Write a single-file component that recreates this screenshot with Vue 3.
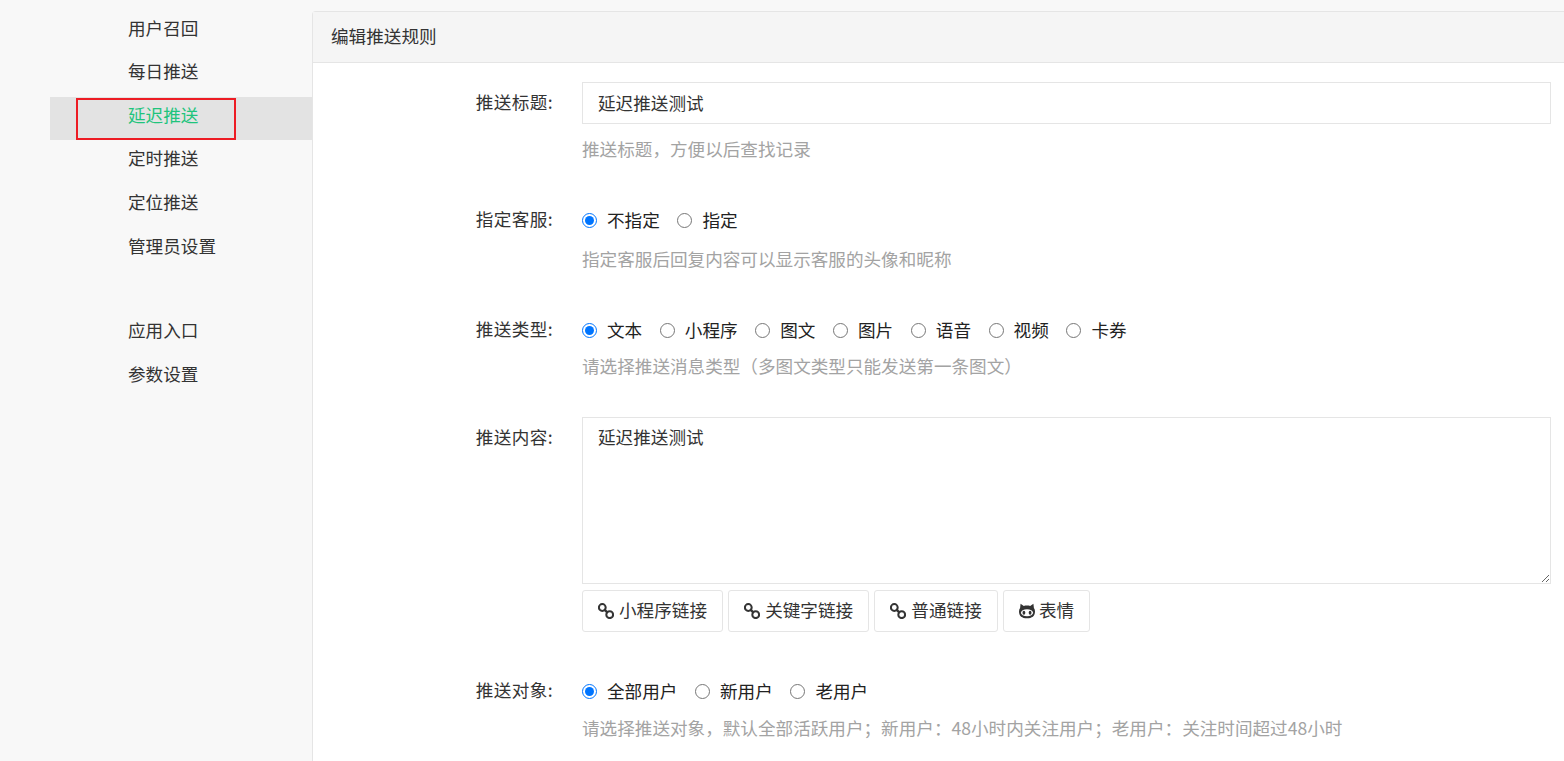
<template>
  <div class="page">
    <aside class="sidebar">
      <ul class="menu">
        <li v-for="item in menuTop" :key="item" class="menu-item" :class="{ active: item === '延迟推送' }">
          {{ item }}
          <span v-if="item === '延迟推送'" class="marker"></span>
        </li>
      </ul>
      <ul class="menu menu-second">
        <li v-for="item in menuBottom" :key="item" class="menu-item">{{ item }}</li>
      </ul>
    </aside>

    <section class="panel">
      <div class="panel-heading">编辑推送规则</div>
      <form class="panel-body" @submit.prevent>
        <div class="row row-title">
          <label class="row-label">推送标题:</label>
          <div class="row-main">
            <input class="text-input" type="text" value="延迟推送测试" />
            <p class="help help-title">推送标题，方便以后查找记录</p>
          </div>
        </div>

        <div class="row row-staff">
          <label class="row-label">指定客服:</label>
          <div class="row-main">
            <div class="radios">
              <label v-for="(opt, i) in staffOptions" :key="opt" class="radio">
                <input type="radio" name="staff" :checked="i === 0" />{{ opt }}
              </label>
            </div>
            <p class="help help-staff">指定客服后回复内容可以显示客服的头像和昵称</p>
          </div>
        </div>

        <div class="row row-type">
          <label class="row-label">推送类型:</label>
          <div class="row-main">
            <div class="radios">
              <label v-for="(opt, i) in typeOptions" :key="opt" class="radio">
                <input type="radio" name="type" :checked="i === 0" />{{ opt }}
              </label>
            </div>
            <p class="help">请选择推送消息类型（多图文类型只能发送第一条图文）</p>
          </div>
        </div>

        <div class="row row-content">
          <label class="row-label">推送内容:</label>
          <div class="row-main">
            <textarea class="text-area" value="延迟推送测试"></textarea>
            <div class="tools">
              <button v-for="btn in linkButtons" :key="btn" type="button" class="tool-btn">
                <svg class="icon" viewBox="0 0 16 16" width="16" height="16">
                  <circle cx="4.300" cy="4.500" r="3.400" fill="none" stroke="#333" stroke-width="2" />
                  <circle cx="11.700" cy="11.700" r="3.400" fill="none" stroke="#333" stroke-width="2" />
                  <path d="M6.200 6.400l3.600 3.400" stroke="#333" stroke-width="2.400" />
                </svg>
                {{ btn }}
              </button>
              <button type="button" class="tool-btn tool-emoji">
                <svg class="icon" viewBox="0 0 16 16" width="16" height="16">
                  <path d="M1.600.800l3.200 2.100c2-.5 4.400-.5 6.400 0L14.400.800l.5 4.300c.7.900 1.100 2 1.100 3.300C16 13 13 15.200 8 15.200S0 13 0 8.400c0-1.300.4-2.400 1.100-3.300z" fill="#333" />
                  <ellipse cx="8" cy="9.800" rx="6.100" ry="3.500" fill="#fff" />
                  <ellipse cx="4.900" cy="9.800" rx="1.400" ry="2" fill="#333" />
                  <ellipse cx="11.100" cy="9.800" rx="1.400" ry="2" fill="#333" />
                </svg>
                表情
              </button>
            </div>
          </div>
        </div>

        <div class="row row-target">
          <label class="row-label">推送对象:</label>
          <div class="row-main">
            <div class="radios">
              <label v-for="(opt, i) in targetOptions" :key="opt" class="radio">
                <input type="radio" name="target" :checked="i === 0" />{{ opt }}
              </label>
            </div>
            <p class="help help-target">请选择推送对象，默认全部活跃用户；新用户：48小时内关注用户；老用户：关注时间超过48小时</p>
          </div>
        </div>
      </form>
    </section>
  </div>
</template>

<script setup>
const menuTop = ['用户召回', '每日推送', '延迟推送', '定时推送', '定位推送', '管理员设置']
const menuBottom = ['应用入口', '参数设置']
const staffOptions = ['不指定', '指定']
const typeOptions = ['文本', '小程序', '图文', '图片', '语音', '视频', '卡券']
const targetOptions = ['全部用户', '新用户', '老用户']
const linkButtons = ['小程序链接', '关键字链接', '普通链接']
</script>

<style>
html,
body {
  margin: 0;
  background: #fff;
}
</style>

<style scoped>
.page {
  display: flex;
  height: 761px;
  overflow: hidden;
  background: #f8f8f8;
  font-family: "Noto Sans CJK SC", "Liberation Sans", sans-serif;
  font-size: 17.6px;
  color: #333;
}

.sidebar {
  width: 262px;
  margin-left: 50px;
  padding-top: 9.6px;
  flex-shrink: 0;
}

.menu {
  list-style: none;
  margin: 0;
  padding: 0;
}

.menu-second {
  margin-top: 41.2px;
}

.menu-item {
  position: relative;
  height: 43.6px;
  box-sizing: border-box;
  padding-left: 78px;
  line-height: 36.4px;
}

.menu-item.active {
  background: #e3e3e3;
  color: #1fc47d;
}

.marker {
  position: absolute;
  left: 26px;
  top: 1px;
  width: 160px;
  height: 42px;
  box-sizing: border-box;
  border: 2px solid #ed1c24;
}

.panel {
  flex: 1;
  margin-top: 11px;
  background: #fff;
  border-top: 1px solid #e5e5e5;
  border-left: 1px solid #e5e5e5;
  border-top-left-radius: 4px;
}

.panel-heading {
  height: 50px;
  line-height: 48px;
  padding-left: 18px;
  background: #f5f5f5;
  border-bottom: 1px solid #e5e5e5;
}

.panel-body {
  padding: 19px 13px 0 0;
}

.row {
  display: flex;
}

.row-label {
  width: 240px;
  flex-shrink: 0;
  text-align: right;
  line-height: 40px;
  letter-spacing: 0.4px;
}

.row-main {
  flex: 1;
  margin-left: 29px;
  min-width: 0;
}

.row-staff,
.row-type {
  margin-top: 35px;
}

.row-content {
  margin-top: 36px;
}

.row-target {
  margin-top: 38px;
}

.text-input,
.text-area {
  display: block;
  width: 100%;
  box-sizing: border-box;
  border: 1px solid #e5e5e5;
  outline: none;
  padding: 0 15px;
  font: inherit;
  color: #333;
  background: #fff;
}

.text-input {
  height: 42px;
  padding-bottom: 2px;
}

.text-area {
  height: 167px;
  padding-top: 6px;
  resize: vertical;
  line-height: 26px;
}

.radios {
  display: flex;
  align-items: center;
  height: 40px;
  color: #222;
}

.radio {
  display: flex;
  align-items: center;
  margin-right: 17.6px;
}

.radio input {
  width: 15px;
  height: 15px;
  margin: 2px 10px 0 0;
}

.help {
  margin: 6px 0 0;
  height: 26px;
  line-height: 22px;
  color: #a3a3a3;
  white-space: nowrap;
}

.help-title {
  margin-top: 14px;
}

.help-staff {
  margin-top: 9px;
}

.help-target {
  margin-top: 7px;
}

.tools {
  display: flex;
  gap: 5.2px;
  margin-top: 6px;
}

.tool-btn {
  display: flex;
  align-items: center;
  gap: 5px;
  height: 42px;
  padding: 0 15px 4px;
  border: 1px solid #e5e5e5;
  border-radius: 3px;
  background: #fff;
  font: inherit;
  color: #333;
}

.tool-emoji {
  gap: 4px;
}

.icon {
  flex-shrink: 0;
  margin-top: 4px;
}
</style>
